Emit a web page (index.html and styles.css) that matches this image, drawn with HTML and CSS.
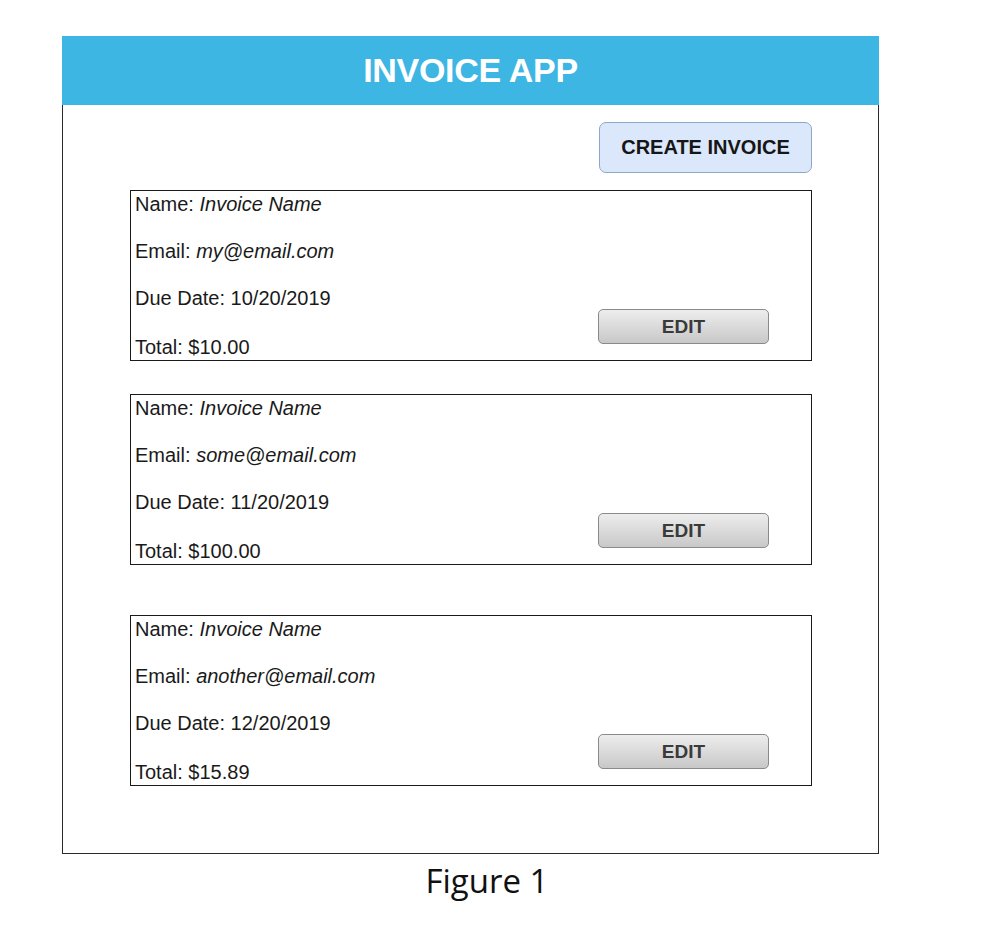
FILE: index.html
```html
<!DOCTYPE html>
<html>
<head>
<meta charset="utf-8">
<title>Invoice App</title>
<link rel="stylesheet" href="styles.css">
</head>
<body>
<div class="page">
  <div class="frame">
    <div class="header"><h1 class="title">INVOICE APP</h1></div>
    <div class="toolbar"><button class="btn-create">CREATE INVOICE</button></div>
    <div class="card card-1">
      <div class="fields">
        <div class="row">Name: <em>Invoice Name</em></div>
        <div class="row">Email: <em>my@email.com</em></div>
        <div class="row">Due Date: 10/20/2019</div>
        <div class="row">Total: $10.00</div>
      </div>
      <button class="btn-edit">EDIT</button>
    </div>
    <div class="card card-2">
      <div class="fields">
        <div class="row">Name: <em>Invoice Name</em></div>
        <div class="row">Email: <em>some@email.com</em></div>
        <div class="row">Due Date: 11/20/2019</div>
        <div class="row">Total: $100.00</div>
      </div>
      <button class="btn-edit">EDIT</button>
    </div>
    <div class="card card-3">
      <div class="fields">
        <div class="row">Name: <em>Invoice Name</em></div>
        <div class="row">Email: <em>another@email.com</em></div>
        <div class="row">Due Date: 12/20/2019</div>
        <div class="row">Total: $15.89</div>
      </div>
      <button class="btn-edit">EDIT</button>
    </div>
  </div>
  <div class="caption">Figure 1</div>
</div>
</body>
</html>
```
FILE: styles.css
```css
html, body {
  margin: 0;
  padding: 0;
  background: #ffffff;
}
.page {
  padding-top: 36px;
  padding-left: 62px;
  font-family: "Liberation Sans", Arial, sans-serif;
}
.frame {
  box-sizing: border-box;
  width: 817px;
  height: 818px;
  border: 1px solid #2a2a2a;
  border-top: none;
  display: flex;
  flex-direction: column;
}
.header {
  height: 69px;
  margin: 0 -1px;
  background: #3db6e3;
  display: flex;
  align-items: center;
  justify-content: center;
}
.title {
  margin: 0;
  color: #ffffff;
  font-size: 34px;
  font-weight: bold;
  letter-spacing: -0.3px;
}
.toolbar {
  display: flex;
  justify-content: flex-end;
  padding: 17px 66px 0 0;
}
.btn-create {
  box-sizing: border-box;
  width: 213px;
  height: 51px;
  background: #dbe8fb;
  border: 1px solid #8fa7c6;
  border-radius: 7px;
  font-family: "Liberation Sans", Arial, sans-serif;
  font-size: 20px;
  font-weight: bold;
  color: #161616;
  padding: 0;
}
.card {
  box-sizing: border-box;
  width: 682px;
  height: 171px;
  margin-left: 67px;
  border: 1px solid #1a1a1a;
  display: flex;
  font-size: 20px;
  color: #1a1a1a;
}
.card-1 { margin-top: 17px; }
.card-2 { margin-top: 33px; }
.card-3 { margin-top: 50px; }
.fields {
  display: flex;
  flex-direction: column;
  gap: 21px;
  padding-left: 4px;
}
.row {
  height: 26px;
  line-height: 26px;
  white-space: nowrap;
}
.row:last-child {
  margin-top: 2px;
}
.row em {
  font-style: italic;
}
.btn-edit {
  box-sizing: border-box;
  width: 171px;
  height: 35px;
  margin: auto 42px 16px auto;
  background: linear-gradient(#ededed, #c8c8c8);
  border: 1px solid #8a8a8a;
  border-radius: 5px;
  font-family: "Liberation Sans", Arial, sans-serif;
  font-size: 19px;
  font-weight: bold;
  color: #3a3a3a;
  padding: 0;
}
.caption {
  width: 850px;
  text-align: center;
  margin-top: 4px;
  font-family: "Open Sans", sans-serif;
  font-size: 33px;
  color: #111111;
}
```
